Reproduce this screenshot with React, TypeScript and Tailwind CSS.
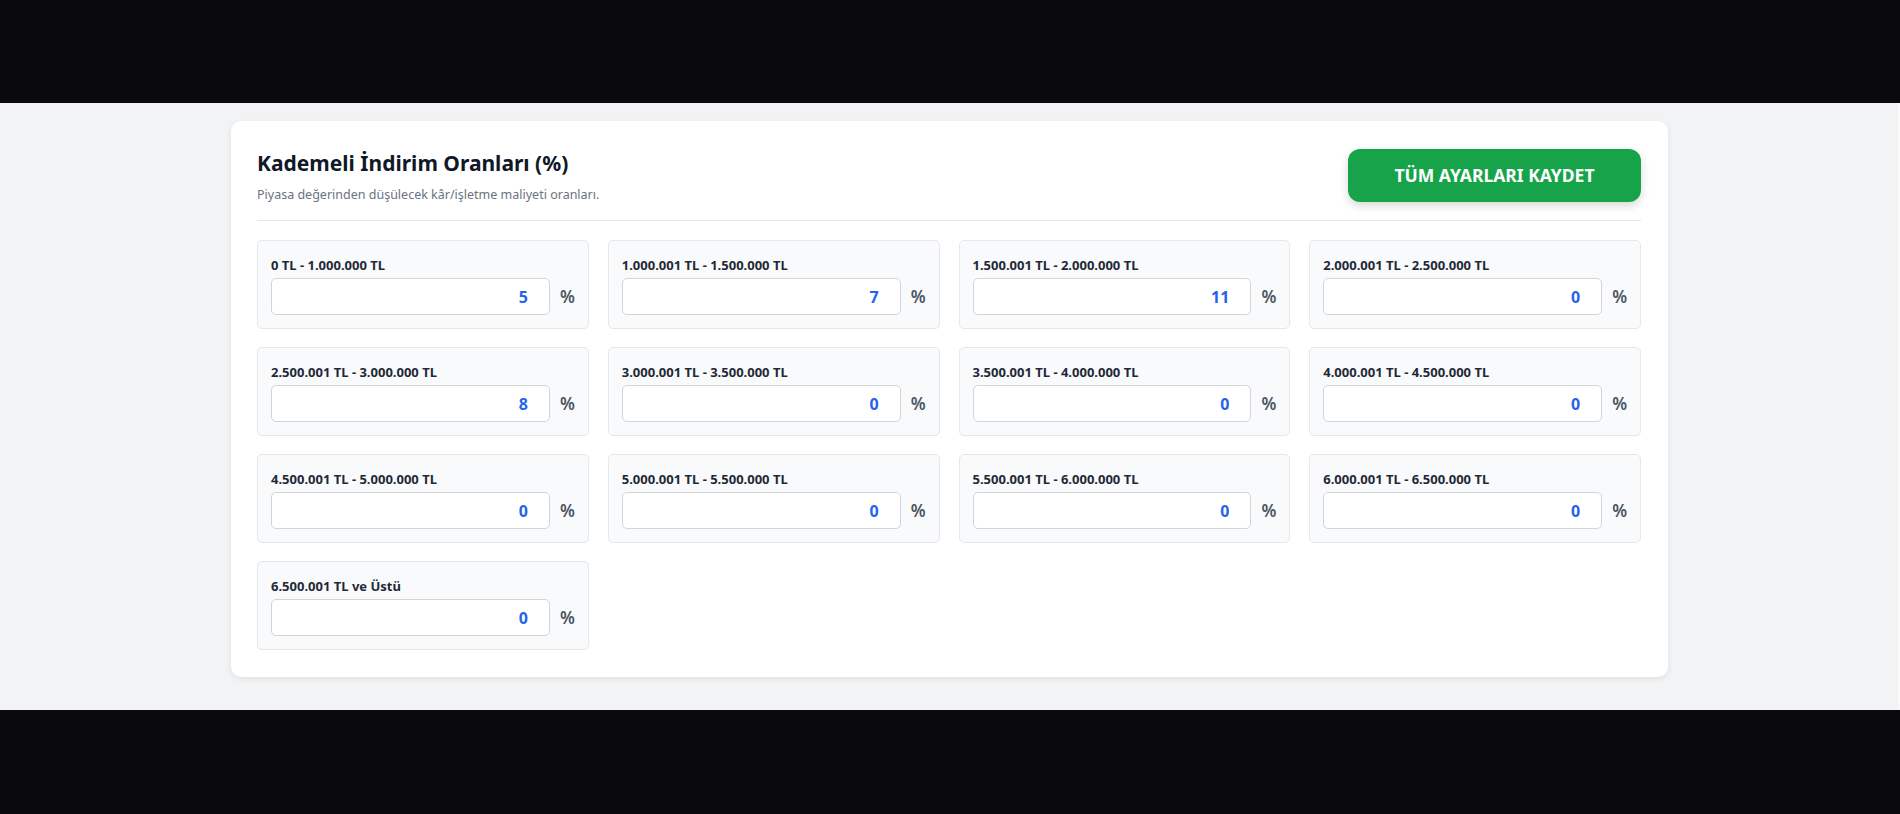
import { useState } from 'react';

type Tier = { label: string; value: number };

const initialTiers: Tier[] = [
  { label: '0 TL - 1.000.000 TL', value: 5 },
  { label: '1.000.001 TL - 1.500.000 TL', value: 7 },
  { label: '1.500.001 TL - 2.000.000 TL', value: 11 },
  { label: '2.000.001 TL - 2.500.000 TL', value: 0 },
  { label: '2.500.001 TL - 3.000.000 TL', value: 8 },
  { label: '3.000.001 TL - 3.500.000 TL', value: 0 },
  { label: '3.500.001 TL - 4.000.000 TL', value: 0 },
  { label: '4.000.001 TL - 4.500.000 TL', value: 0 },
  { label: '4.500.001 TL - 5.000.000 TL', value: 0 },
  { label: '5.000.001 TL - 5.500.000 TL', value: 0 },
  { label: '5.500.001 TL - 6.000.000 TL', value: 0 },
  { label: '6.000.001 TL - 6.500.000 TL', value: 0 },
  { label: '6.500.001 TL ve Üstü', value: 0 },
];

function TierField({ tier, onChange }: { tier: Tier; onChange: (v: number) => void }) {
  return (
    <div className="rounded-[5px] border border-[#e5e7eb] bg-[#f9fafb] px-[13px] pt-[15px] pb-[13px]">
      <label className="block text-[13px] leading-[18px] font-bold text-[#1f2937] mb-[4px]">{tier.label}</label>
      <div className="flex items-center gap-[10px]">
        <input
          type="text"
          inputMode="numeric"
          value={tier.value}
          onChange={(e) => onChange(Number(e.target.value.replace(/\D/g, '')) || 0)}
          className="h-[37px] w-[279px] rounded-[5px] border border-[#d1d5db] bg-white pr-[21px] pl-3 text-right text-[16px] font-bold text-[#2563eb] outline-none"
        />
        <span className="text-[17px] font-semibold text-[#4b5563]">%</span>
      </div>
    </div>
  );
}

export default function App() {
  const [tiers, setTiers] = useState(initialTiers);

  const update = (idx: number, v: number) =>
    setTiers((prev) => prev.map((t, i) => (i === idx ? { ...t, value: v } : t)));

  return (
    <div className="w-full h-[814px] flex flex-col bg-[#0a0a0c]" style={{ fontFamily: '"Noto Sans", "Open Sans", sans-serif' }}>
      <div className="h-[103px] shrink-0" />
      <div className="h-[607px] shrink-0 flex">
        <div className="flex-1 bg-[#f2f3f5] pt-[18px]">
          <div className="mx-auto w-[1437px] rounded-[10px] bg-white px-[26.5px] pt-[27px] pb-[27px] shadow-[0_2px_6px_rgba(0,0,0,0.08)]">
            {/* header */}
            <div className="flex items-start justify-between border-b border-[#e5e7eb] pb-[16px]">
              <div>
                <h2 className="text-[21px] leading-[30px] font-bold text-[#111827]">Kademeli İndirim Oranları (%)</h2>
                <p className="mt-[8px] text-[12.5px] leading-[18px] text-[#6b7280]">
                  Piyasa değerinden düşülecek kâr/işletme maliyeti oranları.
                </p>
              </div>
              <button className="mt-[1px] h-[53px] w-[293px] rounded-[12px] bg-[#16a34a] text-[17.5px] font-bold text-white shadow-[0_4px_10px_rgba(0,0,0,0.15)]">
                TÜM AYARLARI KAYDET
              </button>
            </div>

            {/* tier grid */}
            <div className="mt-[19px] grid grid-cols-4 gap-x-[19px] gap-y-[18px]">
              {tiers.map((t, i) => (
                <TierField key={t.label} tier={t} onChange={(v) => update(i, v)} />
              ))}
            </div>
          </div>
        </div>
        <div className="w-[2px] bg-[#fafafa]" />
      </div>
      <div className="flex-1" />
    </div>
  );
}
